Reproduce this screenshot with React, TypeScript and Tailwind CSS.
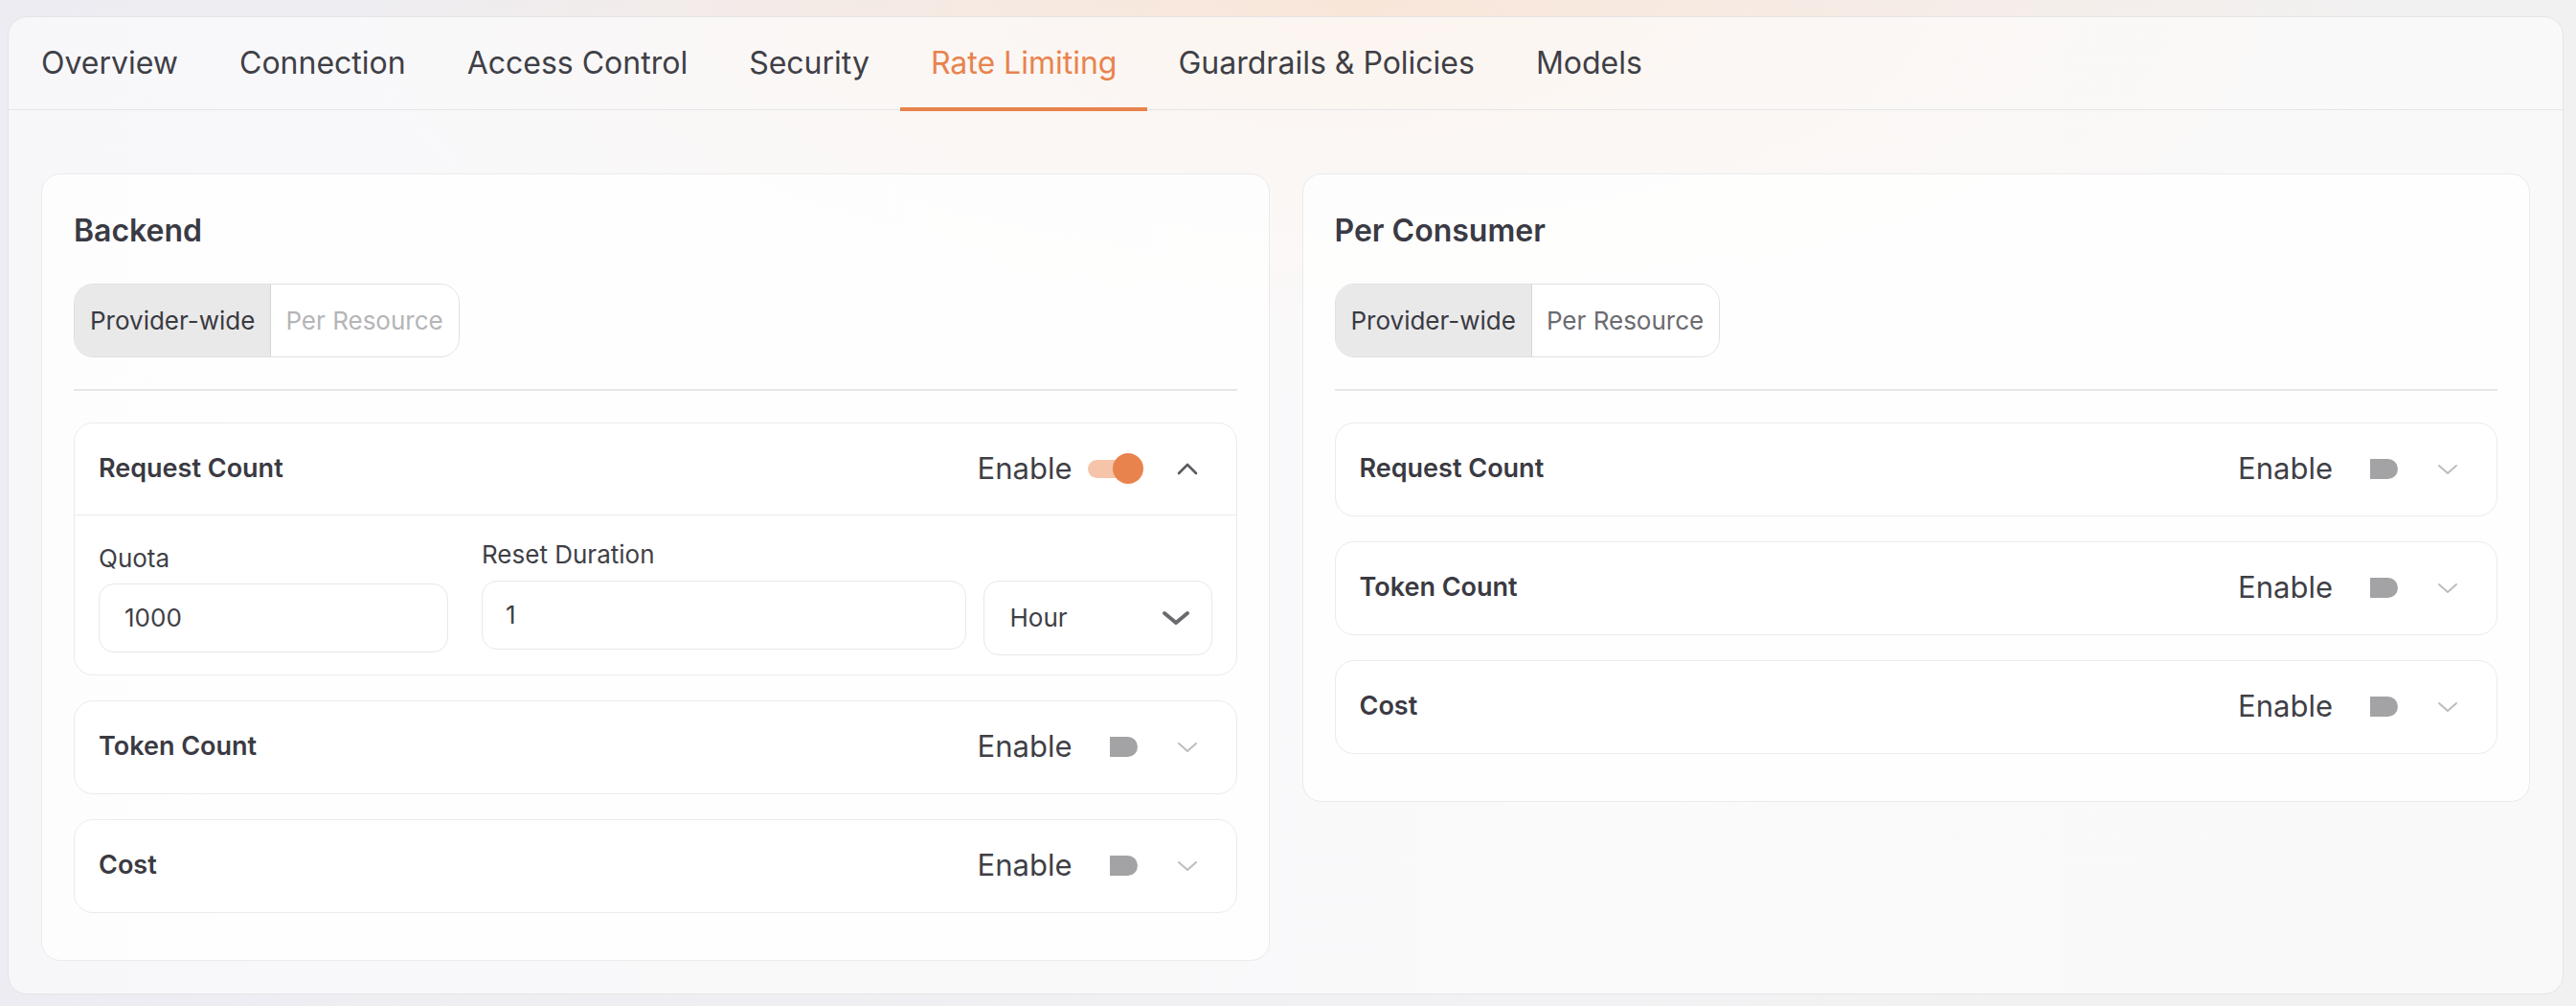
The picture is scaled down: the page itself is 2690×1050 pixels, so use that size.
import React from 'react';

const TABS = ['Overview', 'Connection', 'Access Control', 'Security', 'Rate Limiting', 'Guardrails & Policies', 'Models'];

function ChevronUp() {
  return (
    <svg width="22" height="13" viewBox="0 0 22 13" fill="none">
      <polyline points="2,11 11,2 20,11" stroke="#5a5a5f" strokeWidth="2.6" strokeLinecap="round" strokeLinejoin="round" />
    </svg>
  );
}

function ChevronDown({ light }: { light?: boolean }) {
  return (
    <svg width="22" height="12" viewBox="0 0 22 12" fill="none">
      <polyline
        points="2,2 11,10 20,2"
        stroke={light ? '#bdbdc0' : '#6a6a6e'}
        strokeWidth={light ? 2 : 4}
        strokeLinecap="round"
        strokeLinejoin="round"
      />
    </svg>
  );
}

function Toggle({ on }: { on?: boolean }) {
  if (on) {
    return (
      <div className="relative w-[58px] h-[32px] flex items-center">
        <div className="w-[50px] h-[19px] rounded-full bg-[#f5c4a9]" />
        <div className="absolute right-0 top-0 w-[32px] h-[32px] rounded-full bg-[#e8834d]" />
      </div>
    );
  }
  return (
    <div className="w-[58px] h-[32px] flex items-center pl-[23px]">
      <div className="w-[29px] h-[21px] rounded-l-[3px] rounded-r-full bg-[#a3a3a5]" />
    </div>
  );
}

function LimitRow({ title, on, children }: { title: string; on?: boolean; children?: React.ReactNode }) {
  return (
    <div className="rounded-[20px] border-[1.5px] border-[#ebebeb] bg-white">
      <div className={`flex items-center justify-between h-[96px] pl-[25px] pr-[40px] ${on ? 'border-b-[1.5px] border-[#ebebeb]' : ''}`}>
        <span className="text-[27px] font-semibold text-[#3a3a42]">{title}</span>
        <div className="flex items-center">
          <span className="text-[31px] text-[#3f3f46] mr-[16px]">Enable</span>
          <Toggle on={on} />
          <div className="w-[22px] ml-[35px] flex items-center justify-center">
            {on ? <ChevronUp /> : <ChevronDown light />}
          </div>
        </div>
      </div>
      {children}
    </div>
  );
}

function Segmented({ dimmed }: { dimmed?: boolean }) {
  return (
    <div className="inline-flex h-[77px] rounded-[20px] border-[1.5px] border-[#e0e0e0] overflow-hidden text-[26px]">
      <div className="flex items-center px-[16px] bg-[#e9e9e9] border-r-[1.5px] border-[#d6d6d6] text-[#3a3a42]">Provider-wide</div>
      <div className={`flex items-center pl-[15px] pr-[16px] bg-white ${dimmed ? 'text-[#b5b5b8]' : 'text-[#6b6b70]'}`}>Per Resource</div>
    </div>
  );
}

function Card({ title, dimmed, expanded }: { title: string; dimmed?: boolean; expanded?: boolean }) {
  return (
    <div className="rounded-[20px] border border-[#ebebeb] bg-white/80 px-[33px] pt-[39px] pb-[49px]">
      <h2 className="text-[32px] leading-[40px] font-semibold text-[#3a3a44]">{title}</h2>
      <div className="mt-[35px]">
        <Segmented dimmed={dimmed} />
      </div>
      <div className="mt-[33px] h-[1.5px] bg-[#e6e6e6]" />
      <div className="mt-[33px] flex flex-col gap-[26px]">
        <LimitRow title="Request Count" on={expanded}>
          {expanded && (
            <div className="flex items-start px-[25px] pt-[23px] pb-[20px]">
              <div className="w-[365px] mt-[4px]">
                <div className="text-[26px] leading-[36px] text-[#3f3f46]">Quota</div>
                <div className="mt-[8px] h-[72px] rounded-[16px] border-[1.5px] border-[#e8e8e8] bg-white flex items-center pl-[26px] text-[26px] text-[#3f3f46]">
                  1000
                </div>
              </div>
              <div className="flex-1 ml-[35px]">
                <div className="text-[26px] leading-[36px] text-[#3f3f46]">Reset Duration</div>
                <div className="mt-[9px] h-[72px] rounded-[16px] border-[1.5px] border-[#e8e8e8] bg-white flex items-center pl-[24px] text-[26px] text-[#3f3f46]">
                  1
                </div>
              </div>
              <div className="ml-[18px] mt-[45px] w-[239px] h-[78px] rounded-[16px] border-[1.5px] border-[#e8e8e8] bg-white flex items-center justify-between pl-[27px] pr-[22px] text-[26px] text-[#3f3f46]">
                <span>Hour</span>
                <svg width="30" height="16" viewBox="0 0 30 16" fill="none">
                  <polyline points="3,3 15,13 27,3" stroke="#6a6a6e" strokeWidth="4" strokeLinecap="round" strokeLinejoin="round" />
                </svg>
              </div>
            </div>
          )}
        </LimitRow>
        <LimitRow title="Token Count" />
        <LimitRow title="Cost" />
      </div>
    </div>
  );
}

export default function App() {
  return (
    <div
      className="w-full min-h-[1050px] pt-[17px] pl-[8px] pr-[13px] pb-[14px] font-[Inter,sans-serif] bg-[radial-gradient(ellipse_1100px_420px_at_1420px_0px,#f9e6d9,transparent),linear-gradient(90deg,#ececf2,#f2f2f4_60%,#f1f1f1)]"
    >
      <div className="rounded-[20px] border-[1.5px] border-[#e4e4e6] bg-white/60">
        {/* tabs */}
        <div className="flex h-[97px] border-b-[1.5px] border-[#e5e5e7] pl-[2px]">
          {TABS.map((t) => {
            const active = t === 'Rate Limiting';
            return (
              <div
                key={t}
                className={`relative h-full flex items-center px-[32px] text-[32px] ${active ? 'text-[#e8834d]' : 'text-[#3f3f46]'}`}
              >
                {t}
                {active && <div className="absolute left-0 right-0 -bottom-[1.5px] h-[4px] bg-[#e8834d]" />}
              </div>
            );
          })}
        </div>

        <div className="grid grid-cols-2 gap-[34px] items-start px-[34px] pt-[66px] pb-[34px]">
          <Card title="Backend" dimmed expanded />
          <Card title="Per Consumer" />
        </div>
      </div>
    </div>
  );
}
